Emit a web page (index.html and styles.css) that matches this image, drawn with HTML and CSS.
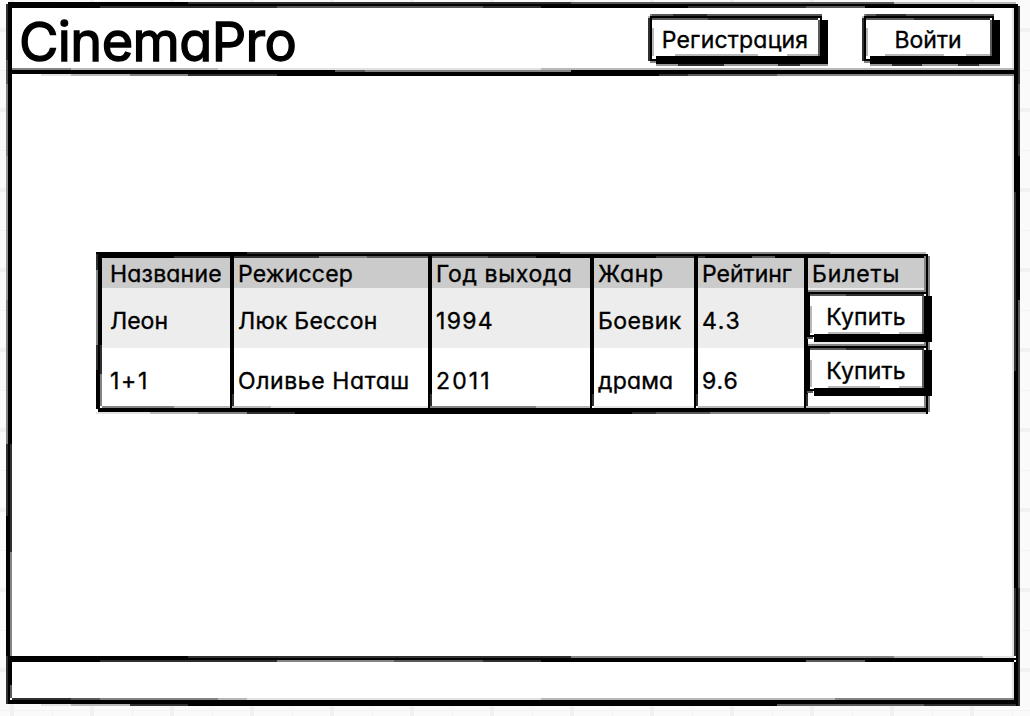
FILE: index.html
```html
<!DOCTYPE html>
<html lang="ru">
<head>
<meta charset="utf-8">
<title>CinemaPro</title>
<link rel="stylesheet" href="styles.css">
</head>
<body>
<svg width="0" height="0" class="defs" aria-hidden="true">
  <symbol id="edge-wide" viewBox="0 0 180 52">
    <path class="s3" d="M1 4V47M25 1H59"/><path class="s5" d="M4 1H25M59 1H174M4 5H60"/>
    <path class="s3" d="M60 5H170"/><path class="s0" d="M2 3H174M3 2V47M2 46H8M173 3V8"/>
    <path class="s8" d="M2 1H4M2 48H8"/><path class="sb" d="M5 14V42M27 41H110M139 41H170M0 3H2"/>
    <path class="fill" d="M172 6H180V50H8V42H172Z"/><path class="s5" d="M171 6V42"/>
    <path class="s9" d="M8 51H30M76 51H130M152 51H180"/><path class="s3" d="M30 51H76M130 51H152"/>
  </symbol>
  <symbol id="edge-mid" viewBox="0 0 138 52">
    <path class="s3" d="M1 4V47M14 1H44"/><path class="s5" d="M4 1H14M44 1H132M4 5H52"/>
    <path class="s3" d="M52 5H128"/><path class="s0" d="M2 3H132M3 2V47M2 46H8M131 3V8"/>
    <path class="s8" d="M2 1H4M2 48H8"/><path class="sb" d="M5 14V42M23 41H82M104 41H128M0 3H2"/>
    <path class="fill" d="M130 6H138V50H8V42H130Z"/><path class="s5" d="M129 6V42"/>
    <path class="s9" d="M8 51H30M60 51H96M117 51H138"/><path class="s3" d="M30 51H60M96 51H117"/>
  </symbol>
  <symbol id="edge-buy" viewBox="0 0 126 52">
    <path class="s8" d="M2 1H120"/>
    <path class="s5" d="M4 5H40M1 48H7"/><path class="s3" d="M40 5H118"/><path class="s0" d="M2 3H120M3 2V47M2 46H8"/>
    <path class="sb" d="M5 16V43M22 43H74M93 43H116"/>
    <path class="fill" d="M118 6H126V52H8V44H118Z"/><path class="s5" d="M117 6V44"/>
  </symbol>
</svg>
<div class="window">
  <header class="header">
    <h1 class="brand">CinemaPro</h1>
    <nav class="actions">
      <button class="btn btn-wide"><svg class="edge"><use href="#edge-wide"/></svg><span class="ls-2">Регистрация</span></button>
      <button class="btn btn-mid"><svg class="edge"><use href="#edge-mid"/></svg><span>Войти</span></button>
    </nav>
  </header>
  <main class="content">
    <div class="table">
      <div class="row head">
        <div class="ls-2">Название</div><div class="ls-2">Режиссер</div><div class="ls-6">Год выхода</div><div class="ls-6">Жанр</div><div>Рейтинг</div><div class="ls-8">Билеты</div>
      </div>
      <div class="row odd">
        <div>Леон</div><div class="ls-2">Люк Бессон</div><div class="ls-13">1994</div><div class="ls-4">Боевик</div><div class="ls-16">4.3</div><div></div>
      </div>
      <div class="row">
        <div class="ls-16">1+1</div><div class="ls-6">Оливье Наташ</div><div class="ls-20">2011</div><div class="ls-2">драма</div><div class="ls-8">9.6</div><div></div>
      </div>
      <svg class="edge" viewBox="96 252 834 162">
        <path class="s0" d="M96 253H247M96 255H926M96 257H174M536 257H656M705 257H752M775 257H924M98 409H928M98 411H928M295 413H632"/>
        <path class="s3" d="M247 253H560M174 257H319M488 257H536M656 257H705M247 413H295M632 413H656"/>
        <path class="s5" d="M367 257H488M752 257H775M656 413H710"/>
        <path class="s8" d="M560 253H830M319 257H367M102 407H174M430 407H536M198 413H247M710 413H830"/>
        <path class="sb" d="M830 253H926M174 407H271M536 407H590M698 407H924M150 413H198M830 413H928"/>
        <path class="sd" d="M271 407H430M594 407H694M96 413H150"/>
        <path class="s0" d="M97 370V409M99 252V412M101 254V345M927 254V414"/>
        <path class="s3" d="M97 254V270M97 345V370M101 345V374"/>
        <path class="s8" d="M97 270V345M101 374V406M925 256V408M929 256V412"/>
        <path class="s0" d="M231 254V410M233 254V394M429 254V410M431 254V394M591 254V410M593 254V394M695 254V410M697 254V394M805 254V410M807 254V394"/>
        <path class="s3" d="M233 394V406M431 394V406M593 394V406M697 394V406M807 394V406"/>
      </svg>
      <div class="buys">
        <button class="btn btn-buy"><svg class="edge"><use href="#edge-buy"/></svg><span class="ls-2">Купить</span></button>
        <button class="btn btn-buy"><svg class="edge"><use href="#edge-buy"/></svg><span class="ls-2">Купить</span></button>
      </div>
    </div>
  </main>
  <footer class="footer"></footer>
  <svg class="edge" viewBox="6 2 1014 704">
    <path class="s0" d="M8 3H188M8 5H1018M8 7H100M541 7H688M865 7H1016"/>
    <path class="s3" d="M188 3H571M100 7H277M483 7H541M688 7H806"/>
    <path class="s5" d="M571 3H894M277 7H483M806 7H865"/><path class="sb" d="M894 3H1016"/>
    <path class="s8" d="M12 69H71"/><path class="sb" d="M71 69H218M541 69H1014"/><path class="sd" d="M218 69H541"/>
    <path class="s0" d="M10 71H335M571 71H1016M10 73H1016M277 75H659"/>
    <path class="s8" d="M365 71H571M130 75H188M777 75H1014"/><path class="s5" d="M335 71H365M688 75H777"/>
    <path class="sd" d="M41 75H71"/><path class="sb" d="M71 75H130"/><path class="s3" d="M188 75H277M659 75H688"/>
    <path class="s0" d="M10 657H188M10 659H1016M10 661H100M541 661H806M865 661H1014"/>
    <path class="s3" d="M188 657H571M100 661H277M483 661H541"/><path class="s8" d="M571 657H894M277 661H394"/>
    <path class="s5" d="M394 661H483M806 661H865"/><path class="sb" d="M894 657H983"/><path class="sd" d="M983 657H1014"/>
    <path class="s3" d="M12 699H71M130 705H188M924 705H1018"/><path class="s5" d="M71 699H100M777 705H924"/>
    <path class="s8" d="M100 699H218M835 699H1014"/><path class="sb" d="M218 699H247M541 699H835M71 705H130"/>
    <path class="sd" d="M247 699H541M41 705H71"/><path class="s0" d="M8 701H1018M10 703H1018M188 705H777"/>
    <path class="s3" d="M7 4V60M7 444V516M7 656V704M11 444V552"/><path class="s5" d="M7 60V84M11 685V698"/>
    <path class="s8" d="M7 84V156M7 300V444M11 552V656"/><path class="s9" d="M7 156V300"/>
    <path class="s0" d="M7 516V656M9 2V704M11 4V444M11 656V685"/>
    <path class="sd" d="M1013 8V68M1013 76V656M1013 662V698"/>
    <path class="s0" d="M1015 4V192M1015 371V588M1015 662V704M1017 4V706M1019 156V300"/>
    <path class="s3" d="M1015 192V371M1015 588V656M1019 6V84M1019 120V156M1019 588V706"/><path class="s5" d="M1019 84V120M1019 300V588"/>
  </svg>
</div>
</body>
</html>
```

FILE: styles.css
```css
* { box-sizing: border-box; }
body {
  margin: 0;
  height: 716px;
  overflow: hidden;
  padding: 2px 10px 0 6px;
  color: #000;
  font: 400 23px/30px Inter, "Noto Sans", sans-serif;
  font-feature-settings: "cv11" 1;
  -webkit-text-stroke: 0.35px #000;
  background-color: #fafafa;
  background-image:
    linear-gradient(#f1f1f1 4px, transparent 4px),
    linear-gradient(90deg, #f1f1f1 4px, transparent 4px),
    linear-gradient(#f3f3f3 1px, transparent 1px),
    linear-gradient(90deg, #f3f3f3 1px, transparent 1px);
  background-size: 80px 80px;
  background-position: 0 28px, 10px 0, 0 70px, 52px 0;
}
.defs { position: absolute; }
.window {
  position: relative;
  width: 1014px;
  height: 704px;
  display: flex;
  flex-direction: column;
}
.header {
  height: 70px;
  margin: 2px 4px 0 2px;
  padding: 10px 16px 0 11px;
  display: flex;
  justify-content: space-between;
  background: #fff;
}
.brand {
  margin: -2px 0 0;
  font-size: 54px;
  font-weight: 400;
  line-height: 60px;
  letter-spacing: -0.6px;
  -webkit-text-stroke: 1.4px #000;
}
.actions { display: flex; gap: 34px; }
.btn {
  position: relative;
  height: 52px;
  padding: 0 6px 0 0;
  border: 0;
  background: #fff;
  color: #000;
  font: inherit;
  font-feature-settings: inherit;
  display: flex;
  align-items: center;
  justify-content: center;
}
.btn span { position: relative; }
.btn-wide { width: 180px; }
.btn-mid { width: 138px; }
.btn-buy {
  width: 126px;
  padding-top: 2px;
  background: linear-gradient(#fff, #fff) 2px 0 / 118px 100% no-repeat;
}
.edge {
  position: absolute;
  inset: 0;
  width: 100%;
  height: 100%;
  pointer-events: none;
}
path { fill: none; stroke-width: 2; shape-rendering: crispEdges; }
.fill { fill: #000; }
.s0 { stroke: #000; }
.s3 { stroke: #303030; }
.s5 { stroke: #5a5a5a; }
.s8 { stroke: #848484; }
.s9 { stroke: #999; }
.sb { stroke: #b8b8b8; }
.sd { stroke: #e2e2e2; }
.ls-2 { letter-spacing: 0.2px; }
.ls-4 { letter-spacing: 0.4px; }
.ls-6 { letter-spacing: 0.6px; }
.ls-8 { letter-spacing: 0.85px; }
.ls-13 { letter-spacing: 1.3px; }
.ls-16 { letter-spacing: 1.7px; }
.ls-20 { letter-spacing: 2.1px; }
.content {
  flex: 1;
  margin: 0 4px 0 2px;
  padding: 178px 0 0 88px;
  background: #fff;
}
.table {
  position: relative;
  width: 834px;
  height: 162px;
  padding: 4px;
}
.row {
  height: 60px;
  padding-top: 5px;
  display: grid;
  grid-template-columns: 131px 198px 162px 104px 110px 121px;
  align-items: center;
}
.row div { padding-left: 7px; white-space: nowrap; }
.row div:first-child { padding-left: 10px; }
.row.head { height: 32px; background: #cbcbcb; padding-top: 3px; }
.row.odd { background: #ededed; }
.buys {
  position: absolute;
  left: 710px;
  top: 38px;
  display: flex;
  flex-direction: column;
  gap: 2px;
}
.footer { height: 46px; margin: 0 4px 2px 2px; background: #fff; }
```
